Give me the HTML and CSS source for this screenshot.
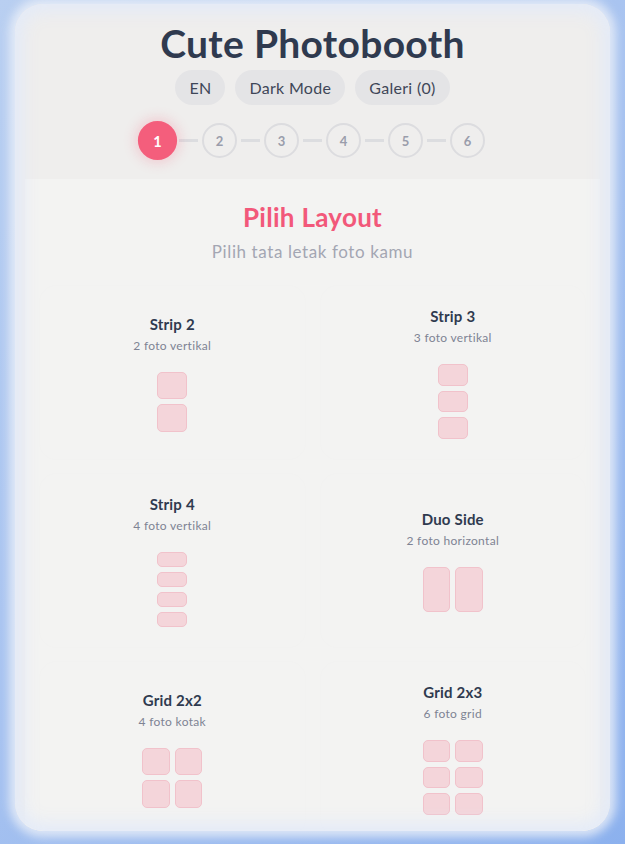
FILE: index.html
```html
<!DOCTYPE html>
<html lang="id">
<head>
<meta charset="UTF-8">
<meta name="viewport" content="width=device-width, initial-scale=1">
<title>Cute Photobooth</title>
<link rel="stylesheet" href="styles.css">
</head>
<body>
<div class="app">
  <div class="header">
    <h1 class="header-title">Cute Photobooth</h1>
    <div class="header-menu">
      <button type="button" class="pill">EN</button>
      <button type="button" class="pill">Dark Mode</button>
      <button type="button" class="pill">Galeri (0)</button>
    </div>
    <div class="steps">
      <span class="step active">1</span><span class="step-line"></span>
      <span class="step">2</span><span class="step-line"></span>
      <span class="step">3</span><span class="step-line"></span>
      <span class="step">4</span><span class="step-line"></span>
      <span class="step">5</span><span class="step-line"></span>
      <span class="step">6</span>
    </div>
  </div>

  <div class="panel">
    <h2 class="panel-title">Pilih Layout</h2>
    <p class="panel-sub">Pilih tata letak foto kamu</p>

    <!-- daftar layout -->
    <div class="layouts">
      <div class="layout">
        <div class="layout-name">Strip 2</div>
        <div class="layout-desc">2 foto vertikal</div>
        <div class="preview strip2"><span></span><span></span></div>
      </div>
      <div class="layout">
        <div class="layout-name">Strip 3</div>
        <div class="layout-desc">3 foto vertikal</div>
        <div class="preview strip3"><span></span><span></span><span></span></div>
      </div>
      <div class="layout">
        <div class="layout-name">Strip 4</div>
        <div class="layout-desc">4 foto vertikal</div>
        <div class="preview strip4"><span></span><span></span><span></span><span></span></div>
      </div>
      <div class="layout">
        <div class="layout-name">Duo Side</div>
        <div class="layout-desc">2 foto horizontal</div>
        <div class="preview duo"><span></span><span></span></div>
      </div>
      <div class="layout">
        <div class="layout-name">Grid 2x2</div>
        <div class="layout-desc">4 foto kotak</div>
        <div class="preview grid4"><span></span><span></span><span></span><span></span></div>
      </div>
      <div class="layout">
        <div class="layout-name">Grid 2x3</div>
        <div class="layout-desc">6 foto grid</div>
        <div class="preview grid6"><span></span><span></span><span></span><span></span><span></span><span></span></div>
      </div>
    </div>
  </div>
</div>
</body>
</html>
```

FILE: styles.css
```css
html, body {
  height: 100%;
}
body {
  margin: 0;
  padding: 4px 15px 13px 15px;
  box-sizing: border-box;
  background: linear-gradient(135deg, #b9cff1 0%, #a6c2f0 50%, #8cb1ee 100%);
  font-family: Lato, "Noto Sans", sans-serif;
  color: #2d3748;
  overflow: hidden;
}
.app {
  position: relative;
  height: 100%;
  overflow: hidden;
  border-radius: 28px;
  background: #efeeed;
  box-shadow: 0 0 10px 6px rgba(236, 240, 248, 0.8);
}
/* soft haze around the edges */
.app::after {
  content: "";
  position: absolute;
  top: 0;
  left: 0;
  right: 0;
  bottom: 0;
  border-radius: inherit;
  box-shadow: inset 0 0 16px 8px rgba(226, 234, 248, 0.9);
  pointer-events: none;
}

.header {
  text-align: center;
  padding: 15px 0 21px;
}
.header-title {
  margin: 0;
  font-size: 39px;
  line-height: 48px;
  font-weight: 700;
  letter-spacing: 0.3px;
  color: #2f3a4f;
}
.header-menu {
  display: flex;
  justify-content: center;
  gap: 10px;
  margin-top: 3px;
}
.pill {
  border: none;
  border-radius: 999px;
  background: #e4e4e6;
  color: #3f4758;
  font-family: inherit;
  font-size: 16px;
  line-height: 19px;
  letter-spacing: 0.3px;
  padding: 8px 14px;
}
.steps {
  display: flex;
  justify-content: center;
  align-items: center;
  margin-top: 18px;
}
.step {
  width: 35px;
  height: 35px;
  box-sizing: border-box;
  border: 2px solid #dcdcdf;
  border-radius: 50%;
  display: flex;
  align-items: center;
  justify-content: center;
  font-size: 13px;
  font-weight: 700;
  color: #9a9dab;
}
.step.active {
  transform: scale(1.12);
  border-color: #f45e7c;
  background: #f45e7c;
  color: #fff;
  box-shadow: 0 0 10px 3px rgba(244, 94, 124, 0.22);
}
.step-line {
  width: 19px;
  height: 3px;
  margin: 0 4px;
  background: #dcdde0;
}

.panel {
  margin: 0 10px;
  padding: 23px 15px 30px;
  background: #f3f3f2;
  text-align: center;
}
.panel-title {
  margin: 0;
  font-size: 26px;
  line-height: 30px;
  font-weight: 700;
  letter-spacing: 0.3px;
  color: #f2587a;
}
.panel-sub {
  margin: 8px 0 0;
  font-size: 17px;
  line-height: 24px;
  letter-spacing: 0.6px;
  color: #a3a6b3;
}

.layouts {
  display: grid;
  grid-template-columns: 1fr 1fr;
  gap: 15px 16px;
  margin-top: 22px;
}
.layout {
  display: flex;
  flex-direction: column;
  justify-content: center;
  align-items: center;
  padding: 20px;
  border-radius: 16px;
  background: #f3f3f2;
  box-shadow: 0 0 5px rgba(0, 0, 0, 0.012);
}
.layout-name {
  font-size: 15px;
  line-height: 20px;
  font-weight: 700;
  letter-spacing: 0.2px;
  color: #2f3a4f;
}
.layout-desc {
  margin-top: 4px;
  font-size: 12px;
  line-height: 16px;
  letter-spacing: 0.3px;
  color: #7e8394;
}

/* small thumbnail of each layout */
.preview {
  display: grid;
  gap: 5px;
  width: 60px;
  margin-top: 18px;
}
.preview span {
  background: #f4d5da;
  border: 1px solid #f1c2cb;
  border-radius: 5px;
}
.strip2 {
  height: 60px;
  width: 30px;
  grid-template-rows: repeat(2, 1fr);
}
.strip3 {
  height: 75px;
  width: 30px;
  grid-template-rows: repeat(3, 1fr);
}
.strip4 {
  height: 75px;
  width: 30px;
  grid-template-rows: repeat(4, 1fr);
}
.duo {
  height: 45px;
  grid-template-columns: 1fr 1fr;
}
.grid4 {
  height: 60px;
  grid-template-columns: 1fr 1fr;
  grid-template-rows: 1fr 1fr;
}
.grid6 {
  height: 75px;
  grid-template-columns: 1fr 1fr;
  grid-template-rows: repeat(3, 1fr);
}
```
